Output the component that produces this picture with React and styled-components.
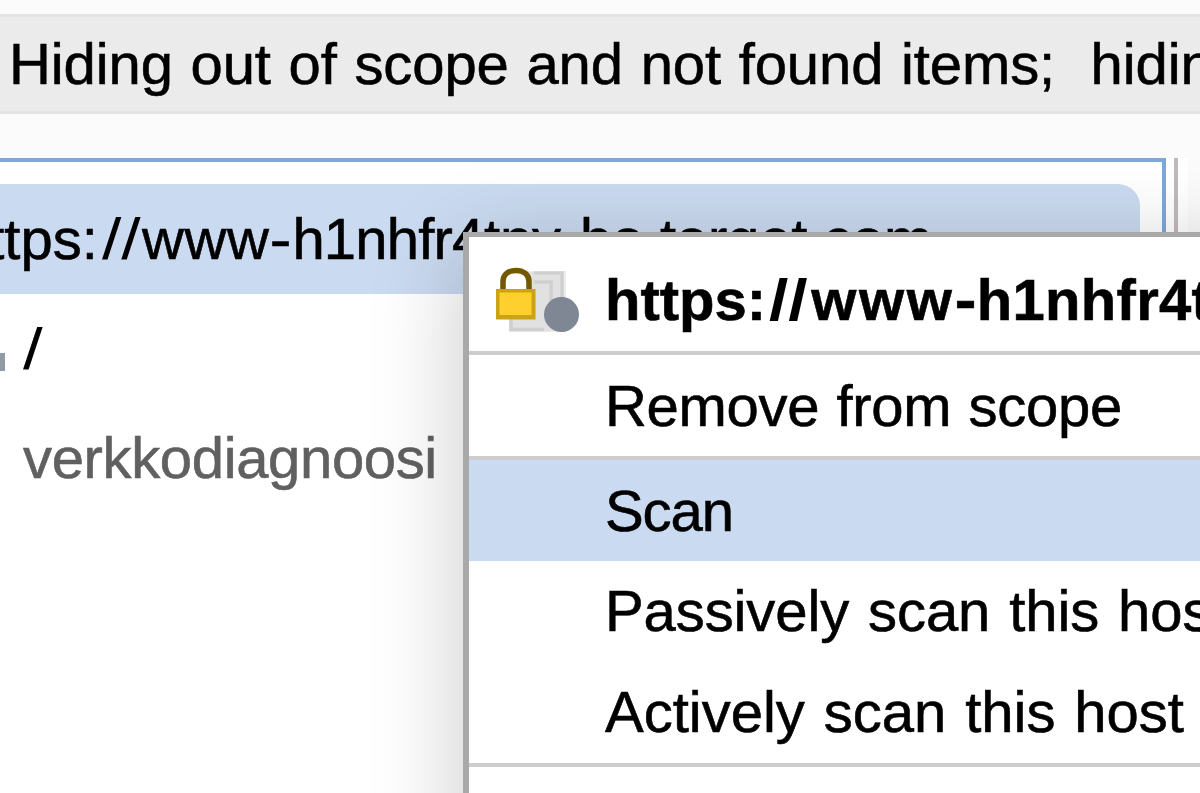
import React from "react";
import styled, { createGlobalStyle } from "styled-components";

const menuItems = [
  { label: "Remove from scope", height: 105, divider: true, tracking: -0.3, wordSpacing: 1.5 },
  { label: "Scan", height: 101, active: true, tracking: -1.1 },
  { label: "Passively scan this host", height: 100, tracking: -0.1, wordSpacing: 3 },
  { label: "Actively scan this host", height: 106, divider: true, wordSpacing: 2.8 },
];

const HostIcon = () => (
  <IconSvg viewBox="0 0 84 68">
    <rect x="13" y="4" width="57" height="61" fill="#ededed" />
    <rect x="14" y="5" width="54" height="59" fill="#e1e1e1" />
    <path d="M38 6H66V40M38 15H55V45M15 50V62.500H48" fill="none" stroke="#cfcfcf" strokeWidth="3.5" />
    <path d="M7 24V15C7 7 13 3.500 20 3.500S33 7 33 15V24" fill="#ffffff" stroke="#725800" strokeWidth="5.5" />
    <rect x="0" y="22" width="39.500" height="30.500" fill="#cda316" />
    <rect x="3.500" y="25.500" width="32" height="22.500" fill="#fdd02f" />
    <circle cx="65.500" cy="47.500" r="17.500" fill="#7f8794" />
  </IconSvg>
);

const HostUrl = ({ bold }) => (
  <>
    https:
    <Slashes $bold={bold}>//</Slashes>
    <Part $tracking={bold ? 2.6 : 0.6}>www</Part>
    <Hyphen $bold={bold}>-</Hyphen>
    <Part $tracking={bold ? 0.3 : -0.8}>h1nhfr</Part>
    <Part $tracking={bold ? 0.3 : -0.2}>4tny-ba.target.com</Part>
  </>
);

export default function App() {
  return (
    <>
      <GlobalStyle />
      <Screen>
        <FilterBar>
          <Label $tracking={-0.1} $wordSpacing={1.7}>
            Hiding out of scope and not found items; &nbsp;hiding CSS
          </Label>
        </FilterBar>
        <Workspace>
          <TreePanel>
            <TreeRow $selected>
              <HostName>
                <HostUrl />
              </HostName>
            </TreeRow>
            <TreeRow>
              <NodeMark />
              <PathLabel>/</PathLabel>
            </TreeRow>
            <TreeRow>
              <NodeMark $empty />
              <Label $muted $tracking={-0.35}>
                verkkodiagnoosi
              </Label>
            </TreeRow>
          </TreePanel>
          <Splitter />
        </Workspace>
        <ContextMenu>
          <MenuHeader>
            <HostIcon />
            <MenuTitle>
              <HostUrl bold />
            </MenuTitle>
          </MenuHeader>
          {menuItems.map((item) => (
            <MenuItem
              key={item.label}
              $height={item.height}
              $active={item.active}
              $divider={item.divider}
            >
              <Label $tracking={item.tracking} $wordSpacing={item.wordSpacing}>
                {item.label}
              </Label>
            </MenuItem>
          ))}
        </ContextMenu>
      </Screen>
    </>
  );
}

const GlobalStyle = createGlobalStyle`
  * {
    box-sizing: border-box;
  }
  body {
    margin: 0;
    overflow: hidden;
    background: #fbfbfb;
    font-family: "Liberation Sans", Helvetica, Arial, sans-serif;
  }
`;

const Screen = styled.div`
  position: relative;
  display: flex;
  flex-direction: column;
  width: 100vw;
  height: 100vh;
  overflow: hidden;
  padding-top: 14px;
  font-size: 58px;
  line-height: 66px;
  color: #000;
  -webkit-text-stroke: 0.6px currentColor;
`;

const FilterBar = styled.header`
  display: flex;
  flex-shrink: 0;
  align-items: center;
  height: 100px;
  padding-left: 9px;
  background: #ebebeb;
  border-top: 3px solid #e4e4e4;
  border-bottom: 3px solid #e4e4e4;
`;

const Label = styled.span`
  white-space: nowrap;
  color: ${(p) => (p.$muted ? "#606060" : "inherit")};
  letter-spacing: ${(p) => p.$tracking || 0}px;
  word-spacing: ${(p) => p.$wordSpacing || 0}px;
`;

const PathLabel = styled(Label)`
  transform: scaleX(1.22);
  transform-origin: left;
  -webkit-text-stroke: 0;
`;

const Part = styled.span`
  letter-spacing: ${(p) => p.$tracking}px;
`;

const Slashes = styled.span`
  display: inline-block;
  margin: ${(p) => (p.$bold ? "0 10px 0 3px" : "0 8px 0 4px")};
  transform: scaleX(1.2);
  transform-origin: left;
  -webkit-text-stroke: 0;
`;

const Hyphen = styled.span`
  display: inline-block;
  margin: 0 ${(p) => (p.$bold ? 1 : 2)}px 0 ${(p) => (p.$bold ? 2 : 1.5)}px;
  transform: scaleX(1.12);
`;

const Workspace = styled.main`
  display: flex;
  flex: 1;
  margin-top: 44px;
`;

const TreePanel = styled.section`
  width: 1166px;
  padding: 22px 22px 0 0;
  background: #fff;
  border-top: 4px solid #7ea8d8;
  border-right: 4px solid #7ea8d8;
`;

const TreeRow = styled.div`
  display: flex;
  align-items: center;
  height: ${(p) => (p.$selected ? 110 : 109)}px;
  overflow: hidden;
  background: ${(p) => (p.$selected ? "#cadaf0" : "transparent")};
  border-top-right-radius: ${(p) => (p.$selected ? "22px" : "0")};
`;

const HostName = styled.span`
  margin-left: -44px;
  white-space: nowrap;
`;

const NodeMark = styled.i`
  width: 5px;
  height: 18px;
  margin: 26px 18px 0 0;
  background: ${(p) => (p.$empty ? "transparent" : "#929aa6")};
`;

const Splitter = styled.div`
  width: 22px;
  background: #fff;
  border-left: 8px solid #fff;
  box-shadow: inset 4px 0 0 #c0b8b9;
`;

const ContextMenu = styled.nav`
  position: absolute;
  top: 232px;
  left: 463px;
  width: 900px;
  height: 760px;
  background: #fff;
  border-top: 5px solid #a9a9a9;
  border-left: 6px solid #a9a9a9;
  box-shadow: 0 20px 85px rgba(0, 0, 0, 0.22);
`;

const MenuHeader = styled.div`
  display: flex;
  align-items: center;
  height: 118px;
  padding-left: 27px;
  border-bottom: 4px solid #cdcdcd;
`;

const IconSvg = styled.svg`
  flex-shrink: 0;
  width: 84px;
  height: 68px;
  margin-top: 14px;
`;

const MenuTitle = styled.strong`
  margin: 12px 0 0 25px;
  white-space: nowrap;
`;

const MenuItem = styled.div`
  display: flex;
  align-items: center;
  height: ${(p) => p.$height}px;
  padding-left: 136px;
  background: ${(p) => (p.$active ? "#cadaf0" : "#fff")};
  border-bottom: ${(p) => (p.$divider ? "4px solid #cdcdcd" : "none")};
`;
